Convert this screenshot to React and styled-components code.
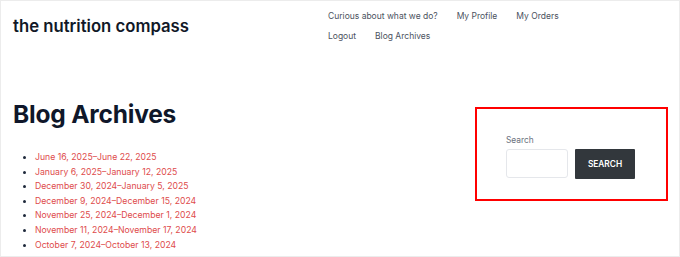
import React from "react";
import styled, { createGlobalStyle } from "styled-components";

const Global = createGlobalStyle`
  html, body { margin: 0; padding: 0; background: #fff; }
  body { font-family: Inter, "Noto Sans", sans-serif; }
  * { box-sizing: border-box; }
`;

const Page = styled.div`
  width: 680px;
  height: 257px;
  border: 1px solid #ececec;
  overflow: hidden;
  display: flex;
  flex-direction: column;
`;

const Header = styled.header`
  display: flex;
  align-items: flex-start;
  padding: 5px 0 0 12px;
  height: 92px;
`;

const SiteTitle = styled.div`
  font-size: 16.7px;
  font-weight: 600;
  color: #111827;
  width: 315px;
  padding-top: 10px;
`;

const Nav = styled.ul`
  list-style: none;
  margin: 0;
  padding: 0;
  display: flex;
  flex-wrap: wrap;
  width: 245px;
  column-gap: 19px;
`;

const NavItem = styled.li`
  font-size: 8.5px;
  line-height: 20px;
  color: #4b5260;
`;

const Main = styled.div`
  display: flex;
  align-items: flex-start;
  padding: 4px 11px 0 12px;
`;

const Content = styled.div`
  flex: 1;
`;

const Title = styled.h1`
  margin: 0;
  font-size: 24.5px;
  font-weight: 700;
  color: #0f172a;
  line-height: 34px;
  letter-spacing: -0.2px;
`;

const List = styled.ul`
  margin: 19px 0 0;
  padding-left: 22px;
`;

const Item = styled.li`
  font-size: 8.7px;
  line-height: 14.6px;
  color: #1e293b;
  &::marker { font-size: 8px; }
`;

const ItemLink = styled.span`
  color: #de4b4b;
`;

const Widget = styled.aside`
  width: 193px;
  margin-top: 10px;
  border: 2px solid #ff0000;
  padding: 25px 0 20px 29px;
`;

const Label = styled.div`
  font-size: 8.4px;
  color: #6b7280;
  line-height: 12px;
  margin-bottom: 3px;
`;

const Row = styled.div`
  display: flex;
  gap: 7px;
  align-items: flex-start;
`;

const Input = styled.div`
  width: 62px;
  height: 29px;
  border: 1px solid #e5e7eb;
  border-radius: 3px;
  background: #fff;
`;

const Button = styled.button`
  width: 60px;
  height: 30px;
  border: none;
  border-radius: 1px;
  background: #32373c;
  color: #fff;
  font-family: Inter, "Noto Sans", sans-serif;
  font-size: 8.3px;
  font-weight: 600;
  padding: 0;
`;

const dates = [
  "June 16, 2025–June 22, 2025",
  "January 6, 2025–January 12, 2025",
  "December 30, 2024–January 5, 2025",
  "December 9, 2024–December 15, 2024",
  "November 25, 2024–December 1, 2024",
  "November 11, 2024–November 17, 2024",
  "October 7, 2024–October 13, 2024",
];

export default function App() {
  return (
    <>
      <Global />
      <Page>
        <Header>
          <SiteTitle>the nutrition compass</SiteTitle>
          <Nav>
            <NavItem>Curious about what we do?</NavItem>
            <NavItem>My Profile</NavItem>
            <NavItem>My Orders</NavItem>
            <NavItem>Logout</NavItem>
            <NavItem>Blog Archives</NavItem>
          </Nav>
        </Header>
        <Main>
          <Content>
            <Title>Blog Archives</Title>
            <List>
              {dates.map((d) => (
                <Item key={d}>
                  <ItemLink>{d}</ItemLink>
                </Item>
              ))}
            </List>
          </Content>
          <Widget>
            <Label>Search</Label>
            <Row>
              <Input />
              <Button>SEARCH</Button>
            </Row>
          </Widget>
        </Main>
      </Page>
    </>
  );
}
